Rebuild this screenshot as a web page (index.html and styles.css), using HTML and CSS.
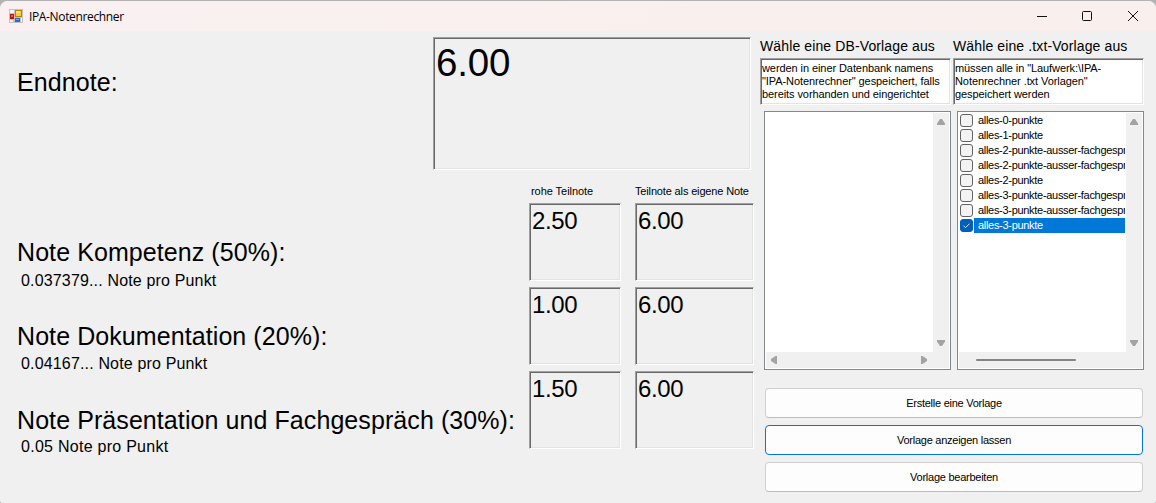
FILE: index.html
```html
<!DOCTYPE html>
<html lang="de">
<head>
<meta charset="utf-8">
<title>IPA-Notenrechner</title>
<link rel="stylesheet" href="styles.css">
</head>
<body>
<div class="window">
  <header class="titlebar">
    <svg class="app-icon" width="14" height="14" viewBox="0 0 14 14" shape-rendering="crispEdges">
      <path d="M0 0h14v14H0z" fill="#c2c2c2"/>
      <path d="M1 1h4v3H1zM1 11h3v2H1zM12 9h1v4h-1z" fill="#f4f4f4"/>
      <path d="M1 5h4v5H1z" fill="#b5170c"/><path d="M2 6h2v2H2z" fill="#e4604c"/>
      <path d="M6 1h7v7H6z" fill="#b98500"/><path d="M7 2h5v5H7z" fill="#ffc93c"/><path d="M7 2h4v2H7z" fill="#ffe27a"/>
      <path d="M6 9h5v4H6z" fill="#2d67d0"/><path d="M7 10h3v1H7z" fill="#78aaf5"/>
    </svg>
    <span class="title">IPA-Notenrechner</span>
    <svg class="controls" width="104" height="14" viewBox="0 0 104 14" fill="none" stroke="#111" stroke-width="1">
      <path d="M1 7.5h10"/>
      <rect x="46.5" y="2.5" width="9" height="9" rx="1"/>
      <path d="M92 2l10 10M102 2L92 12"/>
    </svg>
  </header>
  <main class="content">
    <section class="grades">
      <div class="final">
        <h1 class="label">Endnote:</h1>
        <output class="field field-final">6.00</output>
      </div>
      <div class="parts">
        <span class="col-head raw-head">rohe Teilnote</span>
        <span class="col-head own-head">Teilnote als eigene Note</span>

        <div class="part"><h2 class="label">Note Kompetenz (50%):</h2><p class="hint">0.037379... Note pro Punkt</p></div>
        <output class="field">2.50</output>
        <output class="field own">6.00</output>

        <div class="part"><h2 class="label">Note Dokumentation (20%):</h2><p class="hint hint-mid">0.04167... Note pro Punkt</p></div>
        <output class="field">1.00</output>
        <output class="field own">6.00</output>

        <div class="part"><h2 class="label">Note Präsentation und Fachgespräch (30%):</h2><p class="hint hint-up">0.05 Note pro Punkt</p></div>
        <output class="field">1.50</output>
        <output class="field own">6.00</output>
      </div>
    </section>
    <aside class="templates">
      <div class="pickers">
        <div class="picker">
          <h3 class="picker-title">Wähle eine DB-Vorlage aus</h3>
          <p class="note">werden in einer Datenbank namens<br>"IPA-Notenrechner" gespeichert, falls<br>bereits vorhanden und eingerichtet</p>
          <div class="listbox">
            <ul class="items"></ul>
            <div class="vbar">
              <svg width="10" height="8" viewBox="0 0 10 8"><path d="M4 1h2l3 4.5V7H1V5.500z" fill="#a3a3a3"/></svg>
              <svg width="10" height="8" viewBox="0 0 10 8"><path d="M4 7h2l3-4.500V1H1v1.500z" fill="#a3a3a3"/></svg>
            </div>
            <div class="hbar arrows">
              <svg width="8" height="10" viewBox="0 0 8 10"><path d="M1 4v2l4.500 3H7V1H5.500z" fill="#a3a3a3"/></svg>
              <svg width="8" height="10" viewBox="0 0 8 10"><path d="M7 4v2L2.500 9H1V1h1.500z" fill="#a3a3a3"/></svg>
            </div>
          </div>
        </div>
        <div class="picker">
          <h3 class="picker-title">Wähle eine .txt-Vorlage aus</h3>
          <p class="note">müssen alle in "Laufwerk:\IPA-<br>Notenrechner .txt Vorlagen"<br>gespeichert werden</p>
          <div class="listbox">
            <ul class="items">
              <li class="item"><i class="box"></i><span class="name">alles-0-punkte</span></li>
              <li class="item"><i class="box"></i><span class="name">alles-1-punkte</span></li>
              <li class="item"><i class="box"></i><span class="name">alles-2-punkte-ausser-fachgespr</span></li>
              <li class="item"><i class="box"></i><span class="name">alles-2-punkte-ausser-fachgespr</span></li>
              <li class="item"><i class="box"></i><span class="name">alles-2-punkte</span></li>
              <li class="item"><i class="box"></i><span class="name">alles-3-punkte-ausser-fachgespr</span></li>
              <li class="item"><i class="box"></i><span class="name">alles-3-punkte-ausser-fachgespr</span></li>
              <li class="item selected"><i class="box"><svg width="11" height="11" viewBox="0 0 11 11"><path d="M2.500 5.700l2 2L8.500 3.700" fill="none" stroke="#d8e8f7"/></svg></i><span class="name">alles-3-punkte</span></li>
            </ul>
            <div class="vbar">
              <svg width="10" height="8" viewBox="0 0 10 8"><path d="M4 1h2l3 4.500V7H1V5.500z" fill="#a3a3a3"/></svg>
              <svg width="10" height="8" viewBox="0 0 10 8"><path d="M4 7h2l3-4.500V1H1v1.500z" fill="#a3a3a3"/></svg>
            </div>
            <div class="hbar"><div class="thumb"></div></div>
          </div>
        </div>
      </div>
      <div class="actions">
        <button class="action">Erstelle eine Vorlage</button>
        <button class="action focused">Vorlage anzeigen lassen</button>
        <button class="action">Vorlage bearbeiten</button>
      </div>
    </aside>
  </main>
</div>
</body>
</html>
```
FILE: styles.css
```css
* { box-sizing: border-box; }
body { margin: 0; background: #b5b2b3; font-family: "Liberation Sans", Arial, sans-serif; color: #000; }
h1, h2, h3, p, ul { margin: 0; padding: 0; font-weight: normal; list-style: none; }
.window { width: 1156px; height: 503px; padding-top: 1px; border-radius: 8px 8px 3px 3px; overflow: hidden; background: #f0f0f0; background-clip: content-box; }

.titlebar { height: 30px; display: flex; align-items: center; padding: 0 17px 0 9px; background: linear-gradient(90deg, #faf0f2, #f9f0ee 60%, #f9f0ee); border-radius: 8px 8px 0 0; }
.title { margin-left: 6px; font-family: "Open Sans", "Noto Sans", sans-serif; font-size: 12px; letter-spacing: -0.35px; flex: 1; }
.app-icon { margin-top: -1px; }
.controls { margin-right: -1px; }

.content { display: flex; height: 472px; background: #f0f0f0; }
.grades { width: 760px; padding: 6px 0 0 17px; }
.label { font-size: 25px; line-height: 30px; letter-spacing: 0.08px; white-space: nowrap; }
.final { display: flex; justify-content: space-between; height: 133px; padding-right: 9px; }
.final .label { padding-top: 30px; }
.field { display: block; height: 78px; border: 1px solid; border-color: #a0a0a0 #fff #fff #a0a0a0; box-shadow: inset 1px 1px #696969, inset -1px -1px #e3e3e3; padding: 3px 2px; font-size: 24px; line-height: 27px; letter-spacing: -0.4px; }
.field-final { width: 318px; height: 133px; padding: 2px 2px; font-size: 38.500px; line-height: 45px; letter-spacing: -0.2px; }

.parts { display: grid; grid-template-columns: 498px 92px 119px; grid-template-rows: 27px 78px 78px 78px; row-gap: 6px; column-gap: 14px; }
.col-head { font-size: 11px; letter-spacing: -0.15px; line-height: 13px; padding-top: 15px; white-space: nowrap; }
.raw-head { grid-column: 2; padding-left: 2px; letter-spacing: -0.05px; }
.part { padding-top: 34px; }
.hint { padding-left: 4px; font-size: 16px; line-height: 20px; letter-spacing: 0.16px; margin-top: 4px; white-space: nowrap; }
.hint-mid { margin-top: 3px; }
.hint-up { margin-top: 2px; letter-spacing: 0.27px; }

.templates { width: 384px; padding-top: 6px; }
.pickers { display: flex; gap: 2px; }
.picker { width: 191px; }
.picker-title { font-size: 14px; line-height: 18px; height: 21px; letter-spacing: 0.12px; white-space: nowrap; }
.note { height: 47px; border: 1px solid; border-color: #a0a0a0 #fff #fff #a0a0a0; box-shadow: inset 1px 1px #696969, inset -1px -1px #e3e3e3; background: #fff; padding: 3px 1px; font-size: 11px; letter-spacing: -0.08px; line-height: 13px; white-space: nowrap; }
.listbox { width: 187px; height: 259px; margin: 6px 0 0 4px; padding: 1px; border: 1px solid #828790; background: #fff; display: grid; grid-template: 239px 16px / 167px 16px; }
.items { overflow: hidden; padding-left: 1px; width: 166px; }
.item { display: flex; height: 15px; align-items: center; }
.box { flex: none; width: 13px; height: 13px; border: 1px solid #626262; border-radius: 3px; background: #f3f3f3; }
.name { flex: 1; margin-left: 1px; padding-left: 4px; font-size: 11px; line-height: 15px; letter-spacing: -0.3px; white-space: nowrap; overflow: hidden; }
.selected .name { background: #0078d7; color: #fff; }
.selected .box { background: #005fb8; border-color: #005fb8; display: flex; }
.vbar { background: #f0f0f0; display: flex; flex-direction: column; align-items: center; justify-content: space-between; padding: 5px 0 5px; }
.hbar { grid-column: 1 / 3; background: #f0f0f0; display: flex; align-items: center; padding: 0 17px; }
.arrows { justify-content: space-between; padding: 0 21px 0 4px; }
.thumb { width: 100px; height: 2px; background: #858585; border-radius: 1px; }

.actions { display: grid; gap: 7px; padding: 18px 1px 0 5px; }
.action { height: 30px; padding: 0 0 1px; border: 1px solid #d0d0d0; border-bottom-color: #bcbcbc; border-radius: 4px; background: #fdfdfd; color: #000; font-family: inherit; font-size: 11px; letter-spacing: -0.25px; }
.focused { border-color: #0078d4; }
```
